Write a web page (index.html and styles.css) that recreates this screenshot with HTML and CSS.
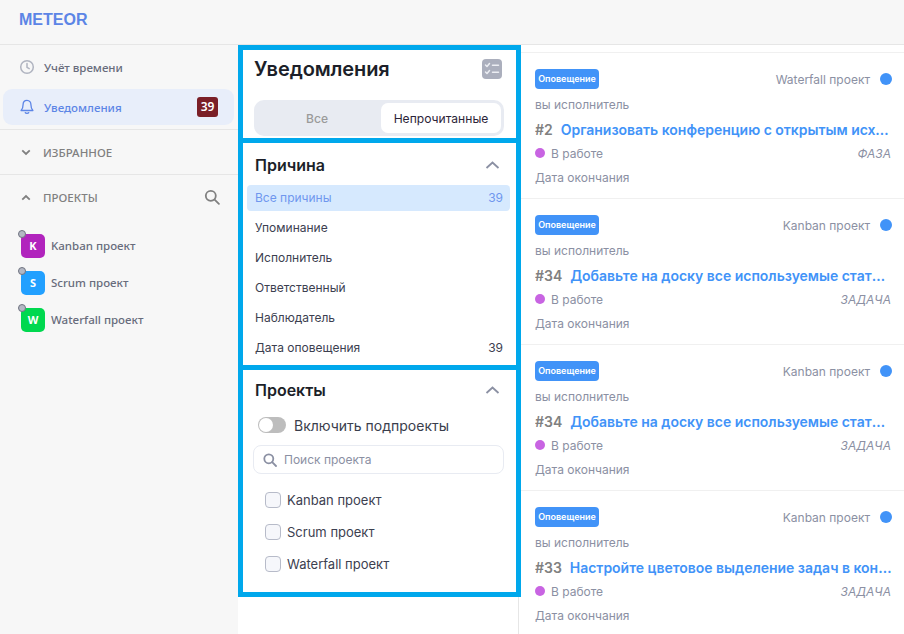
FILE: index.html
```html
<!DOCTYPE html>
<html lang="ru">
<head>
  <meta charset="UTF-8" />
  <meta name="viewport" content="width=device-width, initial-scale=1.0" />
  <title>Уведомления</title>
  <link rel="stylesheet" href="styles.css">
</head>
<body>
  <header class="topbar"><span class="logo">METEOR</span></header>

  <div class="layout">
    <aside class="sidebar">
      <nav class="nav">
        <a class="nav-item">
          <svg class="nav-icon" viewBox="0 0 16 16" fill="none" stroke="#b0b4c0" stroke-width="1.5"><circle cx="8" cy="8" r="6.3"/><path d="M8 4.5V8.3l2.2 1.3" stroke-linecap="round"/></svg>
          <span>Учёт времени</span>
        </a>
        <a class="nav-item active">
          <svg class="nav-icon" viewBox="0 0 16 16" fill="none" stroke="#5c85e6" stroke-width="1.3" stroke-linejoin="round"><path d="M8 1.3c-2.6 0-3.9 2-3.9 4.2 0 3.4-1 4.9-2 6h11.800c-1-1.100-2-2.600-2-6 0-2.200-1.300-4.200-3.900-4.200z"/><path d="M6.300 13.600c.5 1 2.900 1 3.400 0" stroke-linecap="round"/></svg>
          <span>Уведомления</span>
          <b class="count">39</b>
        </a>
      </nav>

      <div class="side-section favorites">
        <svg class="caret" viewBox="0 0 12 8" fill="none" stroke="#808080" stroke-width="2.200"><path d="M1.500 1.500 6 5.800l4.500-4.300"/></svg>
        <span>ИЗБРАННОЕ</span>
      </div>

      <div class="side-section projects-head">
        <svg class="caret" viewBox="0 0 12 8" fill="none" stroke="#808080" stroke-width="2.200"><path d="M1.500 6.500 6 2.200l4.500 4.300"/></svg>
        <span>ПРОЕКТЫ</span>
        <svg class="side-search" viewBox="0 0 16 16" fill="none" stroke="#808080" stroke-width="1.800"><circle cx="6.800" cy="6.800" r="5"/><path d="m10.600 10.600 4.300 4.300" stroke-linecap="round"/></svg>
      </div>

      <ul class="side-projects">
        <li><i class="avatar purple">K</i>Kanban проект</li>
        <li><i class="avatar blue">S</i>Scrum проект</li>
        <li><i class="avatar green">W</i>Waterfall проект</li>
      </ul>
    </aside>

    <section class="filters">
      <div class="frame">
        <div class="title-box">
          <div class="title-row">
            <h1>Уведомления</h1>
            <span class="check-btn">
              <svg viewBox="0 0 20 20" fill="none" stroke="#eceef3" stroke-width="1.500" stroke-linecap="round" stroke-linejoin="round"><path d="M3.500 6l1.500 1.500L7.500 4.500M3.500 13l1.500 1.500 2.500-3M10.500 6.200h6M10.500 13.200h6"/></svg>
            </span>
          </div>
          <div class="tabs">
            <span class="tab">Все</span>
            <span class="tab on">Непрочитанные</span>
          </div>
        </div>

        <div class="reason-box">
          <div class="box-head">
            <h2>Причина</h2>
            <svg class="chevron" viewBox="0 0 14 8" fill="none" stroke="#8b90a3" stroke-width="1.800"><path d="M1 7l6-5.500L13 7"/></svg>
          </div>
          <ul class="reasons">
            <li class="on"><span>Все причины</span><span>39</span></li>
            <li>Упоминание</li>
            <li>Исполнитель</li>
            <li>Ответственный</li>
            <li>Наблюдатель</li>
            <li><span>Дата оповещения</span><span>39</span></li>
          </ul>
        </div>

        <div class="project-box">
          <div class="box-head">
            <h2>Проекты</h2>
            <svg class="chevron" viewBox="0 0 14 8" fill="none" stroke="#8b90a3" stroke-width="1.800"><path d="M1 7l6-5.500L13 7"/></svg>
          </div>
          <div class="switch-row">
            <span class="switch"><i></i></span>
            <span>Включить подпроекты</span>
          </div>
          <div class="search">
            <svg viewBox="0 0 14 14" fill="none" stroke="#8b90a3" stroke-width="1.800"><circle cx="5.800" cy="5.800" r="4.500"/><path d="m9.200 9.200 3.800 3.800" stroke-linecap="round"/></svg>
            <span>Поиск проекта</span>
          </div>
          <label class="check"><i></i>Kanban проект</label>
          <label class="check"><i></i>Scrum проект</label>
          <label class="check"><i></i>Waterfall проект</label>
        </div>
      </div>
    </section>

    <main class="feed">
      <article class="card">
        <div class="card-top"><span class="tag">Оповещение</span><span class="proj">Waterfall проект</span><i class="dot"></i></div>
        <p class="meta">вы исполнитель</p>
        <h3><span class="num">#2</span><a>Организовать конференцию с открытым исходным кодом</a></h3>
        <div class="status"><span><i class="state"></i>В работе</span><em>ФАЗА</em></div>
        <p class="meta">Дата окончания</p>
      </article>
      <article class="card">
        <div class="card-top"><span class="tag">Оповещение</span><span class="proj">Kanban проект</span><i class="dot"></i></div>
        <p class="meta">вы исполнитель</p>
        <h3><span class="num">#34</span><a>Добавьте на доску все используемые статусы задач</a></h3>
        <div class="status"><span><i class="state"></i>В работе</span><em>ЗАДАЧА</em></div>
        <p class="meta">Дата окончания</p>
      </article>
      <article class="card">
        <div class="card-top"><span class="tag">Оповещение</span><span class="proj">Kanban проект</span><i class="dot"></i></div>
        <p class="meta">вы исполнитель</p>
        <h3><span class="num">#34</span><a>Добавьте на доску все используемые статусы задач</a></h3>
        <div class="status"><span><i class="state"></i>В работе</span><em>ЗАДАЧА</em></div>
        <p class="meta">Дата окончания</p>
      </article>
      <article class="card">
        <div class="card-top"><span class="tag">Оповещение</span><span class="proj">Kanban проект</span><i class="dot"></i></div>
        <p class="meta">вы исполнитель</p>
        <h3><span class="num">#33</span><a>Настройте цветовое выделение задач в конструкторе</a></h3>
        <div class="status"><span><i class="state"></i>В работе</span><em>ЗАДАЧА</em></div>
        <p class="meta">Дата окончания</p>
      </article>
    </main>
  </div>
</body>
</html>
```

FILE: styles.css
```css
* {
  box-sizing: border-box;
}
html, body {
  height: 100%;
}
body {
  margin: 0;
  overflow: hidden;
  font-family: Inter, "Noto Sans", sans-serif;
  background: #fff;
  color: #1f2330;
}
h1, h2, h3, p, ul {
  margin: 0;
  padding: 0;
}
ul {
  list-style: none;
}
i, em {
  display: block;
}

.topbar {
  height: 45px;
  padding: 0 19px;
  display: flex;
  align-items: center;
  background: #f7f7f7;
  border-bottom: 1px solid #e6e6e6;
}
.logo {
  font-family: "Liberation Sans", Arial, sans-serif;
  font-size: 16px;
  font-weight: 700;
  color: #5c85e6;
  position: relative;
  top: -2px;
}

.layout {
  display: flex;
  height: 589px;
}

/* left menu */
.sidebar {
  width: 238px;
  flex: none;
  background: #f7f7f7;
  font-family: "Noto Sans", sans-serif;
  font-size: 11.500px;
  font-weight: 500;
  color: #686c7c;
}
.nav {
  padding: 4px 4px 0 3px;
  height: 85px;
  border-bottom: 1px solid #e6e6e6;
}
.nav-item {
  height: 36px;
  margin-bottom: 4px;
  padding: 0 16px 0 16px;
  display: flex;
  align-items: center;
  border-radius: 9px;
}
.nav-item.active {
  background: #e8eefa;
  color: #5c85e6;
}
.nav-icon {
  width: 16px;
  height: 16px;
  margin-right: 9px;
}
.count {
  margin-left: auto;
  width: 21px;
  height: 20px;
  line-height: 20px;
  border-radius: 3px;
  background: #7a1f27;
  color: #fff;
  font-size: 12px;
  font-weight: 600;
  text-align: center;
}
.side-section {
  display: flex;
  align-items: center;
  padding: 0 18px 0 21px;
  color: #808080;
}
.favorites {
  height: 45px;
  border-bottom: 1px solid #e6e6e6;
}
.projects-head {
  height: 44px;
}
.caret {
  width: 10px;
  height: 7px;
  margin-right: 12px;
}
.side-search {
  width: 16px;
  height: 16px;
  margin-left: auto;
}
.side-projects {
  padding: 8px 0 0 21px;
}
.side-projects li {
  height: 37px;
  display: flex;
  align-items: center;
  position: relative;
}
.avatar {
  width: 24px;
  height: 24px;
  margin-right: 6px;
  border-radius: 5px;
  color: #fff;
  font-size: 11px;
  font-weight: 700;
  font-style: normal;
  line-height: 24px;
  text-align: center;
}
.avatar::before {
  content: "";
  position: absolute;
  left: -3px;
  top: 3px;
  width: 6px;
  height: 6px;
  border-radius: 50%;
  background: #b4b8c4;
  border: 1px solid #6f7380;
}
.purple { background: #b124bd; }
.blue { background: #22a0ff; }
.green { background: #00d84f; }

/* filters column */
.filters {
  width: 281px;
  flex: none;
  background: #fff;
  border-right: 1px solid #e6e6e6;
}
.frame {
  width: 283px;
  position: relative;
  background: #00a8ec;
  padding: 5px;
  display: flex;
  flex-direction: column;
  gap: 5px;
  height: 552px;
}
.title-box, .reason-box, .project-box {
  background: #fff;
}
.title-box {
  height: 88px;
  padding: 0 12px 0 11px;
}
.title-row {
  height: 40px;
  display: flex;
  align-items: center;
  justify-content: space-between;
  padding: 0 2px 3px 0;
}
h1 {
  font-size: 20px;
  font-weight: 600;
  letter-spacing: -0.1px;
  color: #1c1f29;
}
.check-btn {
  width: 20px;
  height: 20px;
  border-radius: 4px;
  background: #abafbd;
  display: flex;
}
.tabs {
  margin-top: 10px;
  height: 36px;
  padding: 3px;
  display: flex;
  background: #e8ebf2;
  border-radius: 10px;
  font-size: 12.100px;
}
.tab {
  flex: 1;
  display: flex;
  align-items: center;
  justify-content: center;
  color: #9a9a9a;
  font-weight: 500;
  padding-right: 4px;
}
.tab.on {
  flex: none;
  width: 120px;
  background: #fff;
  border-radius: 7px;
  color: #2b2438;
  font-weight: 400;
  padding: 0;
}
.reason-box {
  height: 222px;
}
.box-head {
  height: 42px;
  padding: 0 16px 3px 12px;
  display: flex;
  align-items: center;
  justify-content: space-between;
}
.reason-box .box-head {
  padding-top: 5px;
}
h2 {
  font-size: 16px;
  font-weight: 600;
  color: #1c1f29;
}
.chevron {
  width: 15px;
  height: 8px;
}
.reasons {
  padding: 0 6px 0 4px;
  font-size: 12px;
  color: #3c4050;
}
.reasons li {
  height: 30px;
  padding: 0 7px 0 8px;
  display: flex;
  align-items: center;
  justify-content: space-between;
}
.reasons li:not(.on) {
  position: relative;
  top: -1px;
}
.reasons li.on {
  height: 26px;
  margin-bottom: 2px;
  padding-bottom: 2px;
  background: #d6e9fe;
  border-radius: 4px;
  color: #6f97ee;
}
.project-box {
  height: 222px;
  font-size: 13.500px;
}
.switch-row {
  padding-left: 15px;
  height: 26px;
  display: flex;
  align-items: center;
  gap: 8px;
  color: #3a3e4c;
  font-size: 14px;
}
.switch {
  width: 28px;
  height: 16px;
  border-radius: 8px;
  background: #bdbdbd;
  padding: 1px;
}
.switch i {
  width: 14px;
  height: 14px;
  border-radius: 50%;
  background: #fff;
}
.search {
  margin: 7px 12px 0 10px;
  height: 29px;
  border: 1px solid #e8ebf2;
  border-radius: 8px;
  display: flex;
  align-items: center;
  gap: 7px;
  padding-left: 9px;
  font-size: 12px;
  color: #8b90a3;
}
.search svg {
  width: 14px;
  height: 14px;
}
.check {
  height: 32px;
  padding-left: 22px;
  display: flex;
  align-items: center;
  gap: 6px;
  color: #3c4050;
  font-size: 13px;
}
.search + .check {
  margin-top: 10px;
}
.check i {
  width: 16px;
  height: 16px;
  border: 1px solid #b7bbc9;
  border-radius: 4px;
  background: #f6f7fb;
}

/* notification list */
.feed {
  flex: 1;
  min-width: 0;
  overflow: hidden;
  padding: 7px 0 0 2px;
}
.card {
  height: 146px;
  padding: 16px 12px 0 14px;
  border-bottom: 1px solid #f0f0f0;
  font-size: 12px;
  color: #8b90a3;
}
.card:first-child {
  height: 147px;
  border-top: 1px solid #f0f0f0;
}
.card-top {
  height: 20px;
  display: flex;
  align-items: center;
}
.tag {
  width: 64px;
  height: 20px;
  line-height: 20px;
  background: #4193f8;
  border-radius: 4px;
  color: #fff;
  font-size: 9px;
  font-weight: 600;
  text-align: center;
  margin-right: auto;
}
.dot {
  width: 12px;
  height: 12px;
  flex: none;
  margin-left: 10px;
  border-radius: 50%;
  background: #4193f8;
}
.meta {
  margin-top: 8px;
  line-height: 16px;
}
h3 {
  margin-top: 7px;
  height: 20px;
  line-height: 20px;
  font-size: 14px;
  font-weight: 600;
  letter-spacing: -0.02px;
  white-space: nowrap;
  overflow: hidden;
  text-overflow: ellipsis;
  color: #4193f8;
}
.num {
  color: #808080;
  margin-right: 8px;
}
.status {
  margin-top: 3px;
  height: 20px;
  display: flex;
  align-items: center;
  justify-content: space-between;
}
.status span {
  display: flex;
  align-items: center;
  gap: 6px;
}
.state {
  width: 10px;
  height: 10px;
  border-radius: 50%;
  background: #c864e2;
}
.status em {
  padding-right: 1px;
}
.status + .meta {
  margin-top: 7px;
}
```
